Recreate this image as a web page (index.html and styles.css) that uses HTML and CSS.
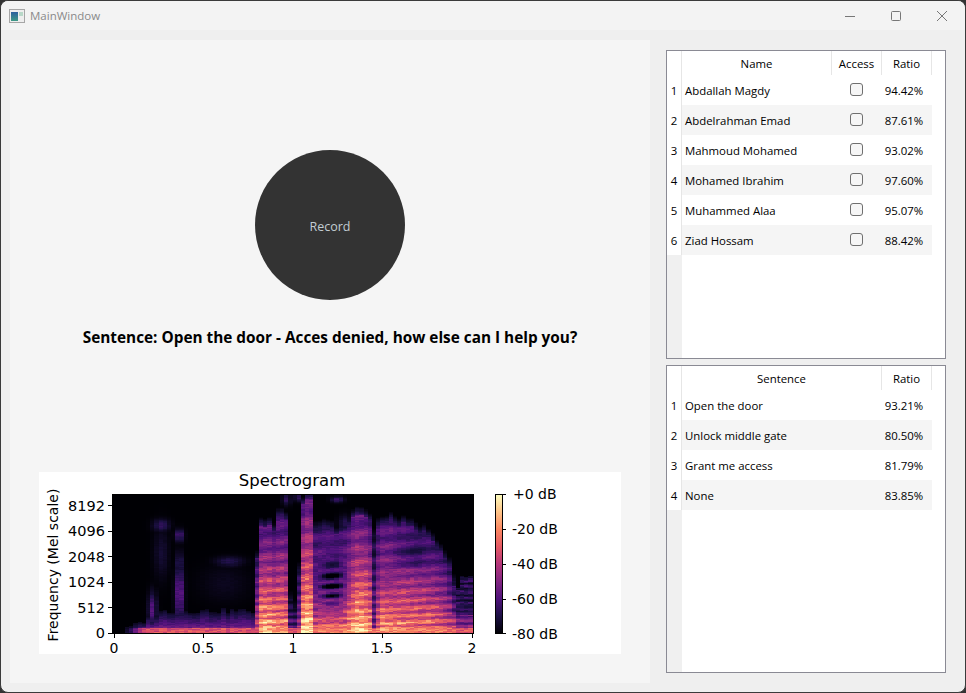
FILE: index.html
```html
<!DOCTYPE html>
<html lang="en">
<head>
    <meta charset="UTF-8">
    <title>MainWindow</title>
    <link rel="stylesheet" href="styles.css">
</head>
<body>
    <div class="window">
        <div class="titlebar">
            <svg class="app-icon" width="16" height="14" viewBox="0 0 16 14">
                <defs>
                    <linearGradient id="icon-fill" x1="0" y1="0" x2="0" y2="1">
                        <stop offset="0" stop-color="#2c5f9e"/>
                        <stop offset="1" stop-color="#3f9a86"/>
                    </linearGradient>
                </defs>
                <rect x="0.5" y="0.5" width="15" height="13" fill="#eeeeee" stroke="#a6a6a6"/>
                <rect x="2" y="3" width="7" height="9" fill="url(#icon-fill)"/>
                <rect x="10" y="3" width="4" height="4" fill="#b8d8c8"/>
            </svg>
            <span class="title">MainWindow</span>
            <div class="controls">
                <svg width="46" height="30" viewBox="0 0 46 30"><path d="M18 15.5h10" stroke="#777" fill="none"/></svg>
                <svg width="46" height="30" viewBox="0 0 46 30"><rect x="18.5" y="10.5" width="9" height="9" rx="1" stroke="#777" fill="none"/></svg>
                <svg width="46" height="30" viewBox="0 0 46 30"><path d="M18 10l10 10M28 10l-10 10" stroke="#777" fill="none"/></svg>
            </div>
        </div>

        <div class="content">
            <div class="panel">
                <button class="record">Record</button>
                <p class="sentence">Sentence: Open the door - Acces denied, how else can I help you?</p>

                <div class="chart">
                    <svg class="chart-svg" width="582" height="182" viewBox="0 0 582 182">
                        <defs>
                            <linearGradient id="magma" x1="0" y1="1" x2="0" y2="0">
                                <stop offset="0" stop-color="#000004"/>
                                <stop offset="0.125" stop-color="#1c1044"/>
                                <stop offset="0.25" stop-color="#4f127b"/>
                                <stop offset="0.375" stop-color="#812581"/>
                                <stop offset="0.5" stop-color="#b5367a"/>
                                <stop offset="0.625" stop-color="#e55964"/>
                                <stop offset="0.75" stop-color="#fb8761"/>
                                <stop offset="0.875" stop-color="#fec488"/>
                                <stop offset="1" stop-color="#fcfdbf"/>
                            </linearGradient>
                        </defs>
                        <text class="chart-title" x="253" y="14">Spectrogram</text>
                        <text class="axis-name" transform="translate(19 93) rotate(-90)">Frequency (Mel scale)</text>

                        <g class="ticks">
                            <path d="M69 161.5h4M69 135.5h4M69 110.5h4M69 84.5h4M69 59.5h4M69 33.5h4"/>
                            <path d="M75.5 162v4M164.5 162v4M254.5 162v4M343.5 162v4M433.5 162v4"/>
                            <path d="M463 22.5h4M463 57.5h4M463 92.5h4M463 127.5h4M463 161.5h4"/>
                        </g>

                        <g class="labels-y">
                            <text x="66" y="166">0</text>
                            <text x="66" y="141">512</text>
                            <text x="66" y="115">1024</text>
                            <text x="66" y="90">2048</text>
                            <text x="66" y="64">4096</text>
                            <text x="66" y="39">8192</text>
                        </g>
                        <g class="labels-x">
                            <text x="75" y="181">0</text>
                            <text x="164" y="181">0.5</text>
                            <text x="254" y="181">1</text>
                            <text x="343" y="181">1.5</text>
                            <text x="433" y="181">2</text>
                        </g>
                        <g class="labels-bar">
                            <text x="474" y="27">+0 dB</text>
                            <text x="473" y="62">-20 dB</text>
                            <text x="473" y="97">-40 dB</text>
                            <text x="473" y="132">-60 dB</text>
                            <text x="473" y="167">-80 dB</text>
                        </g>

                        <rect x="456.5" y="22.5" width="7" height="139" fill="url(#magma)" stroke="#000"/>
                        <rect class="frame" x="73.5" y="22.5" width="361" height="139"/>
                    </svg>
                    <canvas id="spec" class="spec" width="360" height="138"></canvas>
                </div>
            </div>

            <div class="side">
                <div class="table-box">
                    <table class="people">
                        <thead>
                            <tr><th class="num"></th><th>Name</th><th>Access</th><th>Ratio</th></tr>
                        </thead>
                        <tbody>
                            <tr><td class="num">1</td><td>Abdallah Magdy</td><td class="check"><input type="checkbox"></td><td class="ratio">94.42%</td></tr>
                            <tr><td class="num">2</td><td>Abdelrahman Emad</td><td class="check"><input type="checkbox"></td><td class="ratio">87.61%</td></tr>
                            <tr><td class="num">3</td><td>Mahmoud Mohamed</td><td class="check"><input type="checkbox"></td><td class="ratio">93.02%</td></tr>
                            <tr><td class="num">4</td><td>Mohamed Ibrahim</td><td class="check"><input type="checkbox"></td><td class="ratio">97.60%</td></tr>
                            <tr><td class="num">5</td><td>Muhammed Alaa</td><td class="check"><input type="checkbox"></td><td class="ratio">95.07%</td></tr>
                            <tr><td class="num">6</td><td>Ziad Hossam</td><td class="check"><input type="checkbox"></td><td class="ratio">88.42%</td></tr>
                        </tbody>
                    </table>
                </div>
                <div class="table-box">
                    <table class="sentences">
                        <thead>
                            <tr><th class="num"></th><th>Sentence</th><th>Ratio</th></tr>
                        </thead>
                        <tbody>
                            <tr><td class="num">1</td><td>Open the door</td><td class="ratio">93.21%</td></tr>
                            <tr><td class="num">2</td><td>Unlock middle gate</td><td class="ratio">80.50%</td></tr>
                            <tr><td class="num">3</td><td>Grant me access</td><td class="ratio">81.79%</td></tr>
                            <tr><td class="num">4</td><td>None</td><td class="ratio">83.85%</td></tr>
                        </tbody>
                    </table>
                </div>
            </div>
        </div>
    </div>

    <script src="spectrogram.js"></script>
</body>
</html>
```

FILE: styles.css
```css
html, body {
    margin: 0;
    padding: 0;
    height: 100%;
    background-color: #333;
}
.window {
    box-sizing: border-box;
    width: 966px;
    height: 693px;
    display: flex;
    flex-direction: column;
    background-color: #efefef;
    border: 1px solid #3a3a3a;
    border-radius: 8px;
    overflow: hidden;
    font-family: "Open Sans", "Noto Sans", sans-serif;
}

/* title bar */
.titlebar {
    display: flex;
    align-items: center;
    height: 29px;
    flex-shrink: 0;
    padding-left: 8px;
    background-color: #f3f3f3;
}
.app-icon {
    margin-right: 5px;
}
.title {
    font-size: 11.5px;
    color: #8a8a8a;
}
.controls {
    display: flex;
    margin-left: auto;
}
.controls svg {
    display: block;
}

/* main area */
.content {
    flex: 1;
    display: flex;
    min-height: 0;
    padding: 10px 19px 9px 9px;
    gap: 16px;
}
.panel {
    position: relative;
    width: 640px;
    display: flex;
    flex-direction: column;
    align-items: center;
    background-color: #f5f5f5;
}
.record {
    width: 150px;
    height: 150px;
    margin-top: 110px;
    padding: 2px 0 0;
    border: none;
    border-radius: 50%;
    background-color: #333;
    color: #c2ccd2;
    font-family: inherit;
    font-size: 12.5px;
}
.sentence {
    margin: 27px 0 0;
    font-size: 15.35px;
    font-weight: 700;
    color: #000;
    white-space: nowrap;
}

/* plot */
.chart {
    position: relative;
    width: 582px;
    height: 182px;
    margin-top: auto;
    margin-bottom: 29px;
    margin-left: -1px;
    background-color: #fff;
}
.chart-svg {
    display: block;
    font-family: "DejaVu Sans", sans-serif;
    font-size: 14px;
    fill: #000;
}
.chart-title {
    font-size: 16.5px;
    text-anchor: middle;
}
.axis-name {
    text-anchor: middle;
}
.ticks path {
    stroke: #000;
    fill: none;
}
.labels-y text {
    font-size: 14.5px;
    text-anchor: end;
}
.labels-x text {
    text-anchor: middle;
}
.frame {
    fill: none;
    stroke: #000;
}
.spec {
    position: absolute;
    left: 74px;
    top: 23px;
    display: block;
}

/* tables */
.side {
    flex: 1;
    display: flex;
    flex-direction: column;
    gap: 6px;
    padding: 10px 0;
    min-width: 0;
}
.table-box {
    flex: 1;
    min-height: 0;
    border: 1px solid #8a8a94;
    background: linear-gradient(to right, #f0f0f0 15px, #fff 15px);
}
.table-box:first-child {
    flex: none;
    height: 307px;
}
.table-box table {
    width: 265px;
    table-layout: fixed;
    border-collapse: collapse;
    font-size: 11.4px;
    color: #000;
}
th {
    height: 24px;
    padding: 0;
    font-weight: 400;
    text-align: center;
    background-color: #fff;
    border-right: 1px solid #e6e6e6;
}
td {
    height: 30px;
    padding: 0 0 0 3px;
    background-color: #fff;
    white-space: nowrap;
}
tbody tr:nth-child(even) td {
    background-color: #f5f5f5;
}
tbody tr td.num {
    padding: 0;
    text-align: center;
    background-color: #fff;
    border-right: 1px solid #e6e6e6;
}
.num {
    width: 14px;
}
.people th:nth-child(3), .people th:nth-child(4) {
    width: 49px;
}
.sentences th:nth-child(3) {
    width: 49px;
}
td.ratio {
    padding: 0 5px 0 0;
    text-align: center;
}
td.check {
    padding: 0;
    text-align: center;
}
.check input {
    appearance: none;
    box-sizing: border-box;
    display: block;
    width: 13px;
    height: 13px;
    margin: -1px auto 0;
    border: 1px solid #6f6f6f;
    border-radius: 3px;
    background-color: #f6f6f6;
}
```

FILE: spectrogram.js
```js
// Draws the mel spectrogram on the canvas. x is the page x, h is the height above the bottom of the axes.
const canvas = document.getElementById('spec');
const ctx = canvas.getContext('2d');

const magma = [
    [0, 0, 4], [28, 16, 68], [79, 18, 123], [129, 37, 129], [181, 54, 122],
    [229, 89, 100], [251, 135, 97], [254, 196, 136], [252, 253, 191]
];

// page x, height of the voiced part, loudness at the bottom
const voiced = [
    [256, 0, 0], [258, 106, 0.84], [266, 108, 0.9], [274, 104, 0.82], [279, 120, 0.78], [285, 118, 0.82], [289, 110, 0.66],
    [291, 30, 0.28], [296, 28, 0.3], [299, 60, 0.42], [303, 130, 0.9], [306, 138, 1], [314, 138, 0.95],
    [316, 104, 0.62], [322, 106, 0.72], [330, 104, 0.72], [345, 100, 0.72], [350, 112, 0.82], [358, 118, 0.96],
    [370, 116, 0.86], [373, 100, 0.36], [377, 98, 0.36], [380, 112, 0.84], [390, 112, 0.8], [410, 106, 0.74],
    [430, 98, 0.72], [445, 80, 0.68], [453, 62, 0.5], [458, 30, 0.3], [474, 26, 0.26]
];

// quiet patches: x, h, radius x, radius h, strength
const blobs = [
    [153, 24, 4, 16, 0.26], [162, 108, 8, 6, 0.17], [162, 80, 7, 24, 0.09],
    [180, 98, 4, 6, 0.24], [180, 40, 4, 26, 0.32], [180, 70, 3, 12, 0.18],
    [230, 72, 14, 5, 0.14], [225, 50, 24, 18, 0.05],
    [287, 134, 4, 6, 0.16], [298, 136, 3, 4, 0.2], [338, 134, 6, 3, 0.2], [345, 110, 6, 8, 0.14]
];

function lookup(x) {
    for (let i = 1; i < voiced.length; i++) {
        if (x <= voiced[i][0]) {
            const a = voiced[i - 1], b = voiced[i];
            const k = (x - a[0]) / (b[0] - a[0]);
            return [a[1] + (b[1] - a[1]) * k, a[2] + (b[2] - a[2]) * k];
        }
    }
    return [0, 0];
}

function noise(a, b) {
    const s = Math.sin(a * 12.9898 + b * 78.233) * 43758.5453;
    return s - Math.floor(s);
}

// soft round patch, 1 in the middle
function patch(x, h, cx, cy, rx, ry) {
    return Math.exp(-(((x - cx) / rx) ** 2 + ((h - cy) / ry) ** 2));
}

function level(x, h, col, row) {
    let v = 0;

    // low floor before the loud part, it grows from the left
    if (x > 125 && x < 262) {
        const floor = Math.min(20, (x - 125) * 0.5) + 6 * noise(col, 3);
        if (h < floor) v = 0.36 * (1 - h / floor) * Math.min(1, (x - 125) / 20) + 0.05;
    }

    for (const b of blobs) {
        v = Math.max(v, b[4] * patch(x, h, b[0], b[1], b[2], b[3]));
    }

    const [baseTop, low] = lookup(x);
    const top = baseTop + (noise(col, 7) - 0.5) * 6;
    if (baseTop > 0 && h < top + 8) {
        const rel = Math.min(1, h / top);
        let s = low * (1 - 0.72 * Math.pow(rel, 0.75));
        // harmonics, they get wider higher up
        const period = 5.5 + h * 0.04;
        const stripe = Math.sin(h * 6.283 / period - x * 0.04);
        s += stripe * 0.13 * (h > 6 ? 1 : 0.3) * (1 - rel * 0.6);
        // the dark holes between the harmonics around 1.15s
        s -= 0.34 * (1 + stripe) * patch(x, h, 332, 47, 14, 26);
        // the paler ring after 1.6s
        s -= 0.14 * patch(x, h, 413, 78, 18, 14);
        s -= 0.08 * (1 + stripe) * patch(x, h, 389, 50, 10, 20);
        // soft upper edge
        if (h >= top) s = low * 0.22 * (1 - (h - top) / 8);
        v = Math.max(v, s);
    }

    // bottom band
    if (h < 5 && x > 127) {
        v = Math.max(v, 0.6 * Math.min(1, (x - 127) / 18));
        if (x > 258) v = Math.max(v, 0.56 + 0.22 * low);
    }

    // the tail, dim and striped
    const tailTop = 38 + 20 * noise(col, 11);
    if (x > 452 && h > 5 && h < tailTop) {
        v = Math.max(v, 0.11 + 0.06 * Math.sin(h * 1.1) + 0.06 * noise(col, row));
        if (h < 18) v += 0.14;
    }

    v *= 0.86 + 0.28 * noise(col, row);
    return Math.max(0, Math.min(1, v));
}

function color(v) {
    const p = v * (magma.length - 1);
    const i = Math.min(magma.length - 2, Math.floor(p));
    const k = p - i;
    const c = magma[i].map((n, j) => Math.round(n + (magma[i + 1][j] - n) * k));
    return 'rgb(' + c.join(',') + ')';
}

const cols = 86;
const rows = 128;
const cw = canvas.width / cols;
const ch = canvas.height / rows;

for (let col = 0; col < cols; col++) {
    for (let row = 0; row < rows; row++) {
        const x = 113 + (col + 0.5) * cw;
        const h = (row + 0.5) * ch;
        ctx.fillStyle = color(level(x, h, col, row));
        ctx.fillRect(Math.floor(col * cw), Math.floor(canvas.height - (row + 1) * ch), Math.ceil(cw), Math.ceil(ch));
    }
}
```
